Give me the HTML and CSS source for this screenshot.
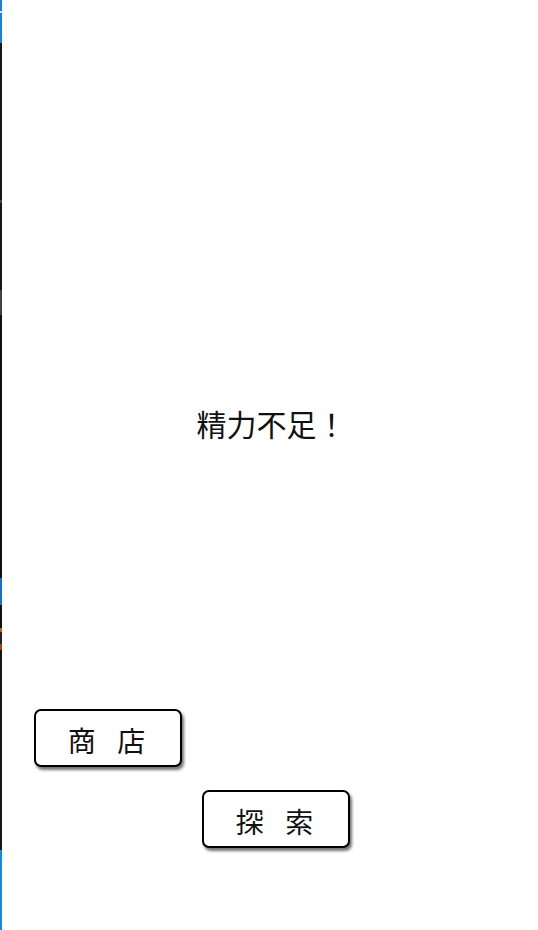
FILE: index.html
```html
<!DOCTYPE html>
<html lang="ja">
<head>
<meta charset="utf-8">
<link rel="stylesheet" href="styles.css">
</head>
<body>
<div class="screen">
  <div class="edge"></div>
  <main class="stage">
    <p class="message">精力不足！</p>
    <div class="actions">
      <button class="btn btn-shop">商 店</button>
      <button class="btn btn-explore">探 索</button>
    </div>
  </main>
</div>
</body>
</html>
```
FILE: styles.css
```css
html, body {
  margin: 0;
  padding: 0;
  background: #fff;
}
.screen {
  width: 538px;
  height: 930px;
  display: flex;
  overflow: hidden;
  font-family: "Noto Sans CJK JP", "Noto Sans CJK SC", "Noto Sans", sans-serif;
  color: #111;
}
.edge {
  flex: 0 0 2px;
  background: linear-gradient(to bottom,
    #1a7fd6 0px, #1a7fd6 11px, #cfe3f5 11px, #cfe3f5 13px, #1a7fd6 13px, #1a7fd6 43px,
    #161616 43px, #161616 200px, #5a3a40 200px, #5a3a40 203px, #161616 203px,
    #161616 290px, #404048 290px, #404048 315px, #101010 315px,
    #101010 578px, #1b6fc8 578px, #1b6fc8 605px, #101010 605px,
    #101010 628px, #c06020 628px, #c06020 632px, #202020 632px,
    #202020 644px, #a04010 644px, #a04010 650px, #161616 650px,
    #161616 850px, #1a8ad8 850px, #1a8ad8 930px);
}
.stage {
  flex: 1;
  display: flex;
  flex-direction: column;
  padding-top: 403px;
}
.message {
  margin: 0 0 0 3px;
  font-size: 30px;
  line-height: 40px;
  text-align: center;
}
.actions {
  margin-top: 266px;
  display: flex;
  flex-direction: column;
  gap: 23px;
}
.btn {
  width: 148px;
  height: 58px;
  box-sizing: border-box;
  border: 2px solid #000;
  border-radius: 7px;
  background: #fff;
  box-shadow: 2px 3px 3px rgba(0,0,0,0.55);
  font-family: "Noto Sans CJK JP", "Noto Sans CJK SC", "Noto Sans", sans-serif;
  font-size: 28px;
  line-height: 1;
  color: #111;
  letter-spacing: 6px;
  padding: 3px 0 0 3px;
  word-spacing: 3px;
}
.btn-shop {
  margin-left: 32px;
}
.btn-explore {
  margin-left: 200px;
}
```
